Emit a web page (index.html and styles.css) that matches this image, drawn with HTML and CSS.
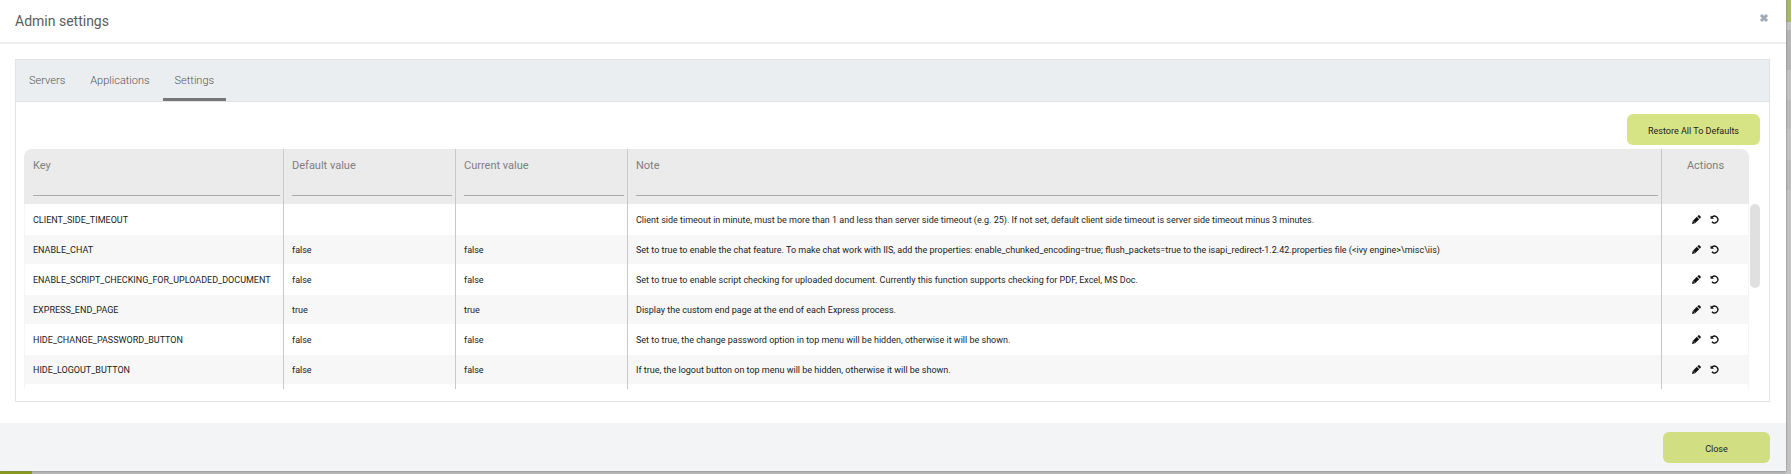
FILE: index.html
```html
<!DOCTYPE html>
<html lang="en">
<head>
<meta charset="utf-8">
<title>Admin settings</title>
<link rel="stylesheet" href="styles.css">
</head>
<body>
<svg class="sprite" aria-hidden="true">
  <symbol id="pencil" viewBox="0 0 16 16"><path d="M0 16l1.200-5.500L8.500 3.200l4.300 4.300L5.500 14.800z"/><path d="M9.500 2.200l1.500-1.500q1.200-1 2.400 0l1.900 1.900q1 1.200 0 2.400L13.800 6.500z"/><path d="M2.600 11l2.400 2.400" stroke="#fff" stroke-width="1"/></symbol>
  <symbol id="undo" viewBox="0 0 16 16"><path d="M1 1l2 1.800A7.200 7.200 0 1 1 2.600 13l1.900-1.700A4.700 4.700 0 1 0 4.900 4.600L7 6.800H1z"/></symbol>
</svg>
<main class="dialog" role="dialog" aria-labelledby="title">
  <header class="dialog-header">
    <h1 class="dialog-title" id="title">Admin settings</h1>
    <button class="dialog-x" type="button" aria-label="Close dialog"><svg class="x-icon" viewBox="0 0 10 10"><path d="M2 2l6 6M8 2l-6 6"/></svg></button>
  </header>
  <section class="dialog-body">
    <div class="panel">
      <nav class="tabs">
        <a class="tab" href="#servers">Servers</a>
        <a class="tab" href="#applications">Applications</a>
        <a class="tab tab-active" href="#settings" aria-current="page">Settings</a>
      </nav>
      <div class="panel-content">
        <div class="toolbar"><button class="button" type="button">Restore All To Defaults</button></div>
        <div class="table-area">
          <div class="table-view">
            <table class="settings">
              <colgroup><col class="col-key"><col class="col-value"><col class="col-value"><col><col class="col-actions"></colgroup>
              <thead>
                <tr>
                  <th scope="col"><label for="f-key">Key</label><input class="filter" id="f-key" type="text"></th>
                  <th scope="col"><label for="f-default">Default value</label><input class="filter" id="f-default" type="text"></th>
                  <th scope="col"><label for="f-current">Current value</label><input class="filter" id="f-current" type="text"></th>
                  <th scope="col"><label for="f-note">Note</label><input class="filter" id="f-note" type="text"></th>
                  <th class="actions-head" scope="col">Actions</th>
                </tr>
              </thead>
              <tbody>
                <tr><td>CLIENT_SIDE_TIMEOUT</td><td></td><td></td><td>Client side timeout in minute, must be more than 1 and less than server side timeout (e.g. 25). If not set, default client side timeout is server side timeout minus 3 minutes.</td><td><div class="actions"><button class="icon-button" type="button" aria-label="Edit"><svg class="icon"><use href="#pencil"/></svg></button><button class="icon-button" type="button" aria-label="Restore"><svg class="icon"><use href="#undo"/></svg></button></div></td></tr>
                <tr><td>ENABLE_CHAT</td><td>false</td><td>false</td><td>Set to true to enable the chat feature. To make chat work with IIS, add the properties: enable_chunked_encoding=true; flush_packets=true to the isapi_redirect-1.2.42.properties file (&lt;ivy engine&gt;\misc\iis)</td><td><div class="actions"><button class="icon-button" type="button" aria-label="Edit"><svg class="icon"><use href="#pencil"/></svg></button><button class="icon-button" type="button" aria-label="Restore"><svg class="icon"><use href="#undo"/></svg></button></div></td></tr>
                <tr><td>ENABLE_SCRIPT_CHECKING_FOR_UPLOADED_DOCUMENT</td><td>false</td><td>false</td><td>Set to true to enable script checking for uploaded document. Currently this function supports checking for PDF, Excel, MS Doc.</td><td><div class="actions"><button class="icon-button" type="button" aria-label="Edit"><svg class="icon"><use href="#pencil"/></svg></button><button class="icon-button" type="button" aria-label="Restore"><svg class="icon"><use href="#undo"/></svg></button></div></td></tr>
                <tr><td>EXPRESS_END_PAGE</td><td>true</td><td>true</td><td>Display the custom end page at the end of each Express process.</td><td><div class="actions"><button class="icon-button" type="button" aria-label="Edit"><svg class="icon"><use href="#pencil"/></svg></button><button class="icon-button" type="button" aria-label="Restore"><svg class="icon"><use href="#undo"/></svg></button></div></td></tr>
                <tr><td>HIDE_CHANGE_PASSWORD_BUTTON</td><td>false</td><td>false</td><td>Set to true, the change password option in top menu will be hidden, otherwise it will be shown.</td><td><div class="actions"><button class="icon-button" type="button" aria-label="Edit"><svg class="icon"><use href="#pencil"/></svg></button><button class="icon-button" type="button" aria-label="Restore"><svg class="icon"><use href="#undo"/></svg></button></div></td></tr>
                <tr><td>HIDE_LOGOUT_BUTTON</td><td>false</td><td>false</td><td>If true, the logout button on top menu will be hidden, otherwise it will be shown.</td><td><div class="actions"><button class="icon-button" type="button" aria-label="Edit"><svg class="icon"><use href="#pencil"/></svg></button><button class="icon-button" type="button" aria-label="Restore"><svg class="icon"><use href="#undo"/></svg></button></div></td></tr>
                <tr><td></td><td></td><td></td><td></td><td></td></tr>
              </tbody>
            </table>
          </div>
          <div class="scrollbar"><div class="thumb"></div></div>
        </div>
      </div>
    </div>
  </section>
  <footer class="dialog-footer"><button class="button button-close" type="button">Close</button></footer>
</main>
</body>
</html>
```
FILE: styles.css
```css
* { box-sizing: border-box; }

body {
  margin: 0;
  height: 100vh;
  padding: 0 5px 3px 0;
  overflow: hidden;
  font-family: Roboto, "Liberation Sans", sans-serif;
  font-size: 9px;
  color: #222;
  background:
    linear-gradient(#8a9a1c, #8a9a1c) left bottom / 32px 3px no-repeat,
    linear-gradient(#a7b86c 22px, #c4c4c4 22px 30px, #b5b5b5 30px 70px, #c3c3c3 70px 100px, #bbb 100px 129px, #c3c3c3 129px 160px, #bbb 160px 190px, #c3c3c3 190px) right top / 5px 100% no-repeat,
    #b8b8b8;
}

button { font: inherit; color: inherit; border: 0; padding: 0; cursor: pointer; }

.sprite { display: none; }

.dialog {
  display: flex;
  flex-direction: column;
  height: 100%;
  background: #fff;
  box-shadow: 0 0 2px #777;
}

.dialog-header {
  display: flex;
  justify-content: space-between;
  padding: 0 17px 0 15px;
  height: 44px;
  border-bottom: 2px solid #eee;
}

.dialog-title {
  margin: 0;
  font-size: 14px;
  font-weight: 400;
  line-height: 43px;
  color: #5c5c5c;
}

.dialog-x { align-self: flex-start; height: 36px; background: none; }
.x-icon { display: block; width: 10px; height: 10px; fill: none; stroke: #9eabb3; stroke-width: 3; }

.dialog-body {
  flex: 1;
  display: flex;
  min-height: 0;
  padding: 15px 16px 21px 15px;
}

.panel {
  flex: 1;
  display: flex;
  flex-direction: column;
  min-width: 0;
  border: 1px solid #e1e4e6;
}

.tabs {
  display: flex;
  height: 42px;
  background: #ebeef1;
  border-bottom: 1px solid #dfe3e6;
}

.tab {
  padding: 0 12px;
  margin-left: 1px;
  line-height: 42px;
  font-size: 11px;
  font-weight: 300;
  color: #555;
  text-decoration: none;
}

.tab-active { border-bottom: 3px solid #777; }

.panel-content {
  flex: 1;
  display: flex;
  flex-direction: column;
  min-height: 0;
  padding: 12px 9px 12px 8px;
}

.toolbar { display: flex; justify-content: flex-end; margin-bottom: 4px; }

.button {
  height: 31px;
  padding: 2px 21px 0;
  border-radius: 6px;
  background: #d7e486;
}

.button-close { min-width: 107px; background: #d1de82; }

.table-area { flex: 1; display: flex; min-height: 0; gap: 1px; }

.table-view { flex: 1; min-width: 0; overflow: hidden; border-radius: 8px 8px 0 0; }

.settings { width: 100%; table-layout: fixed; border-collapse: separate; border-spacing: 0; }
.col-key { width: 259px; }
.col-value { width: 172px; }
.col-actions { width: 88px; }

.settings th {
  height: 55px;
  padding: 8px 3px 0 8px;
  vertical-align: top;
  text-align: left;
  font-size: 11px;
  line-height: 17px;
  font-weight: 400;
  color: #808080;
  background: #ebebeb;
}

.settings th:first-child { padding-left: 9px; }
.settings th + th, .settings td + td { border-left: 1px solid #c8c8c8; }
.settings .actions-head { text-align: center; padding: 8px 0 0; }
.settings label { display: block; }

.filter {
  display: block;
  width: 100%;
  height: 22px;
  border: 0;
  border-bottom: 1px solid #aaa;
  background: transparent;
}

.settings td { height: 31px; padding: 1px 0 0 8px; white-space: nowrap; }
.settings tr:nth-child(even) td { height: 29px; background: #f7f7f7; }
.settings td:first-child { border-left: 1px solid #f5f5f5; }
.settings td:last-child { border-right: 1px solid #f5f5f5; padding: 0; }

.actions { display: flex; justify-content: center; gap: 9px; }
.icon-button { background: none; }
.icon { display: block; width: 9px; height: 9px; fill: #111; }

.scrollbar { width: 10px; padding-top: 55px; }
.thumb { height: 84px; border-radius: 5px; background: #e0e0e0; }

.dialog-footer {
  display: flex;
  justify-content: flex-end;
  padding: 9px 16px 8px;
  background: #f3f4f6;
}
```
